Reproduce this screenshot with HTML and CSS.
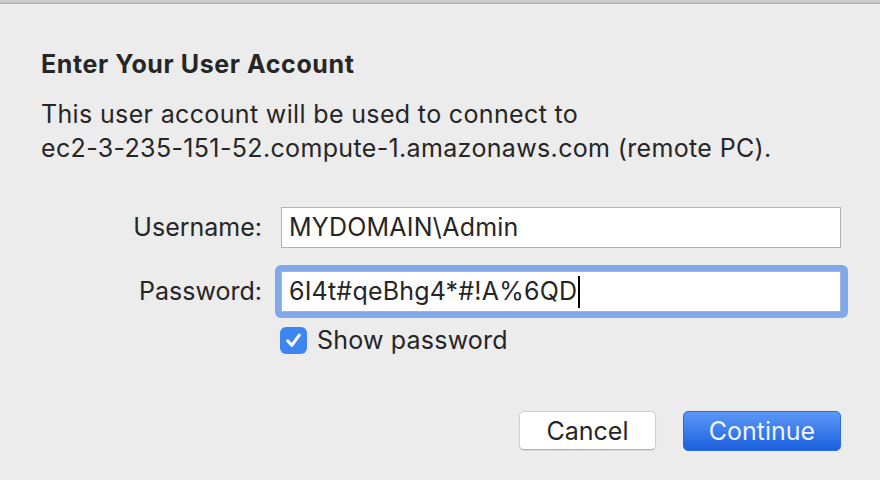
FILE: index.html
```html
<!DOCTYPE html>
<html>
<head>
<meta charset="utf-8">
<link rel="stylesheet" href="styles.css">
</head>
<body>
<div class="topbar"></div>
<main class="dialog">
  <h1 class="title">Enter Your User Account</h1>
  <p class="desc">This user account will be used to connect to<br>ec2-3-235-151-52.compute-1.amazonaws.com (remote PC).</p>
  <div class="form">
    <label class="label">Username:</label>
    <div class="field"><span class="value">MYDOMAIN\Admin</span></div>
    <label class="label label-pw">Password:</label>
    <div class="focus-ring"><div class="field field-focus"><span class="value">6I4t#qeBhg4*#!A%6QD</span><span class="caret"></span></div></div>
    <div></div>
    <div class="check-row">
      <span class="checkbox"><svg viewBox="0 0 28 28" width="28" height="28"><path d="M8 14.5 L12.2 19 L20 8.5" fill="none" stroke="#fff" stroke-width="3.2" stroke-linecap="round" stroke-linejoin="round"/></svg></span>
      <span class="check-label">Show password</span>
    </div>
  </div>
  <div class="buttons">
    <button class="btn btn-cancel">Cancel</button>
    <button class="btn btn-primary">Continue</button>
  </div>
</main>
</body>
</html>
```
FILE: styles.css
```css
html, body {
  margin: 0;
  padding: 0;
  width: 880px;
  height: 480px;
  overflow: hidden;
  background: #ececec;
  font-family: Inter, "Noto Sans", sans-serif;
  color: #262626;
}
.topbar {
  height: 4px;
  background: linear-gradient(#d0d0d0, #c4c4c4 60%, #a8a8a8);
}
.dialog {
  padding: 0 39px 0 41px;
}
.title {
  margin: 0;
  padding-top: 45px;
  font-size: 25px;
  line-height: 30px;
  font-weight: 700;
  letter-spacing: 0.6px;
}
.desc {
  margin: 18px 0 0;
  font-size: 25px;
  line-height: 34px;
  letter-spacing: 0.35px;
}
.form {
  display: grid;
  grid-template-columns: 221px 560px;
  column-gap: 19px;
  margin-top: 42px;
}
.label {
  text-align: right;
  font-size: 25px;
  line-height: 41px;
  height: 41px;
}
.label-pw {
  margin-top: 23px;
}
.field {
  box-sizing: border-box;
  height: 41px;
  background: #fff;
  border: 1px solid #b3b3b3;
  padding-left: 7px;
  font-size: 25px;
  line-height: 39px;
  display: flex;
  align-items: center;
}
.value {
  letter-spacing: 0.2px;
}
.focus-ring {
  margin: 17px -7px 0 -6px;
  padding: 6px 7px 6px 6px;
  background: #81a9ea;
  border-radius: 6px;
}
.field-focus {
  border-color: #9fb6da;
}
.caret {
  display: inline-block;
  width: 2px;
  height: 32px;
  background: #000;
  margin-left: 1px;
}
.check-row {
  display: flex;
  align-items: center;
  gap: 10px;
  margin-top: 7px;
  margin-left: -1px;
}
.checkbox {
  width: 27px;
  height: 27px;
  border-radius: 6px;
  background: #3d85f0;
  display: flex;
  align-items: center;
  justify-content: center;
}
.checkbox svg {
  width: 27px;
  height: 27px;
}
.check-label {
  font-size: 25px;
  letter-spacing: 0.2px;
}
.buttons {
  display: flex;
  justify-content: flex-end;
  gap: 27px;
  margin-top: 56px;
}
.btn {
  font-family: Inter, "Noto Sans", sans-serif;
  font-size: 25px;
  height: 39px;
  border-radius: 5px;
  padding: 0;
}
.btn-cancel {
  width: 137px;
  background: #fff;
  color: #262626;
  border: 1px solid #cfcfcf;
  border-bottom-color: #b0b0b0;
  box-shadow: 0 1px 1px rgba(0,0,0,0.08);
}
.btn-primary {
  width: 158px;
  height: 40px;
  color: #eef3ff;
  border: 1px solid #2a6ae0;
  background: linear-gradient(#5d98f7, #1b5fde);
}
```
